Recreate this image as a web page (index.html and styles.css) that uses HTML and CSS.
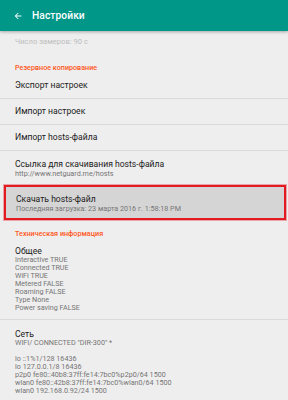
FILE: index.html
```html
<!DOCTYPE html>
<html lang="ru">
<head>
  <meta charset="UTF-8" />
  <meta name="viewport" content="width=device-width, initial-scale=1.0"/>
  <title>Настройки</title>
  <link rel="stylesheet" href="styles.css">
</head>
<body>

  <!-- Toolbar -->
  <header class="toolbar">
    <svg class="back" viewBox="0 0 24 24" width="10" height="10">
      <path d="M20 11H7.83l5.59-5.59L12 4l-8 8 8 8 1.41-1.41L7.83 13H20v-2z" fill="#fff"/>
    </svg>
    <h1>Настройки</h1>
  </header>

  <!-- Preferences -->
  <div class="list">
    <div class="prev">Число замеров: 90 с</div>

    <div class="category">Резервное копирование</div>
    <div class="row">Экспорт настроек</div>
    <div class="row">Импорт настроек</div>
    <div class="row">Импорт hosts-файла</div>
    <div class="row two">
      <div class="title">Ссылка для скачивания hosts-файла</div>
      <div class="summary">http://www.netguard.me/hosts</div>
    </div>
    <div class="row two selected">
      <div class="title">Скачать hosts-файл</div>
      <div class="summary">Последняя загрузка: 23 марта 2016 г. 1:58:18 PM</div>
    </div>

    <div class="category tech">Техническая информация</div>
    <div class="row info">
      <div class="title">Общее</div>
      <div class="lines">Interactive TRUE
Connected TRUE
WiFi TRUE
Metered FALSE
Roaming FALSE
Type None
Power saving FALSE</div>
    </div>
    <div class="row info last">
      <div class="title">Сеть</div>
      <div class="lines">WIFI/ CONNECTED "DIR-300" *

lo ::1%1/128 16436
lo 127.0.0.1/8 16436
p2p0 fe80::40b8:37ff:fe14:7bc0%p2p0/64 1500
wlan0 fe80::42b8:37ff:fe14:7bc0%wlan0/64 1500
wlan0 192.168.0.92/24 1500</div>
    </div>
  </div>

</body>
</html>
```

FILE: styles.css
```css
/* General */
body {
  font-family: Roboto, "Noto Sans", sans-serif;
  margin: 0;
  padding: 0;
  background: #eeeeee;
  color: #212121;
  overflow: hidden;
}

/* Toolbar */
.toolbar {
  display: flex;
  align-items: center;
  height: 31px;
  padding-left: 13px;
  background: #009688;
  box-shadow: 0 1px 3px rgba(0, 0, 0, 0.3);
  position: relative;
  z-index: 1;
}

.toolbar .back {
  margin-right: 9px;
}

.toolbar h1 {
  margin: 0;
  color: #fff;
  font-size: 10.2px;
  font-weight: 500;
  letter-spacing: 0.1px;
}

/* List */
.list {
  padding-top: 6px;
}

.prev {
  padding: 0 15px;
  font-size: 7.6px;
  line-height: 10px;
  color: #bdbdbd;
  height: 25.5px;
}

.category {
  padding: 0 15px;
  font-size: 7.2px;
  font-weight: 500;
  line-height: 10px;
  color: #ff5722;
}

.row {
  display: flex;
  align-items: center;
  height: 25px;
  padding: 0 15px;
  font-size: 8.6px;
  border-bottom: 1px solid #dadada;
}

.row.two {
  display: block;
  height: auto;
  padding-top: 8px;
  padding-bottom: 6px;
  border-bottom: none;
}

.title {
  font-size: 8.6px;
  line-height: 10px;
}

.summary {
  font-size: 7.2px;
  line-height: 10px;
  color: #757575;
  white-space: nowrap;
}

.row.selected {
  margin: 0 2px 0 4px;
  padding: 7px 10px 4px 10px;
  background: #d5d5d5;
  border: 2px solid #e21b23;
  box-shadow: 0 0 0 1px rgba(226, 27, 35, 0.35);
}

.tech {
  padding-top: 9px;
}

.row.info {
  display: block;
  height: auto;
  padding-top: 7px;
  padding-bottom: 7px;
}

.row.info.last {
  border-bottom: none;
  padding-top: 9px;
}

.lines {
  font-size: 7.2px;
  line-height: 8px;
  color: #757575;
  white-space: pre;
}
```
